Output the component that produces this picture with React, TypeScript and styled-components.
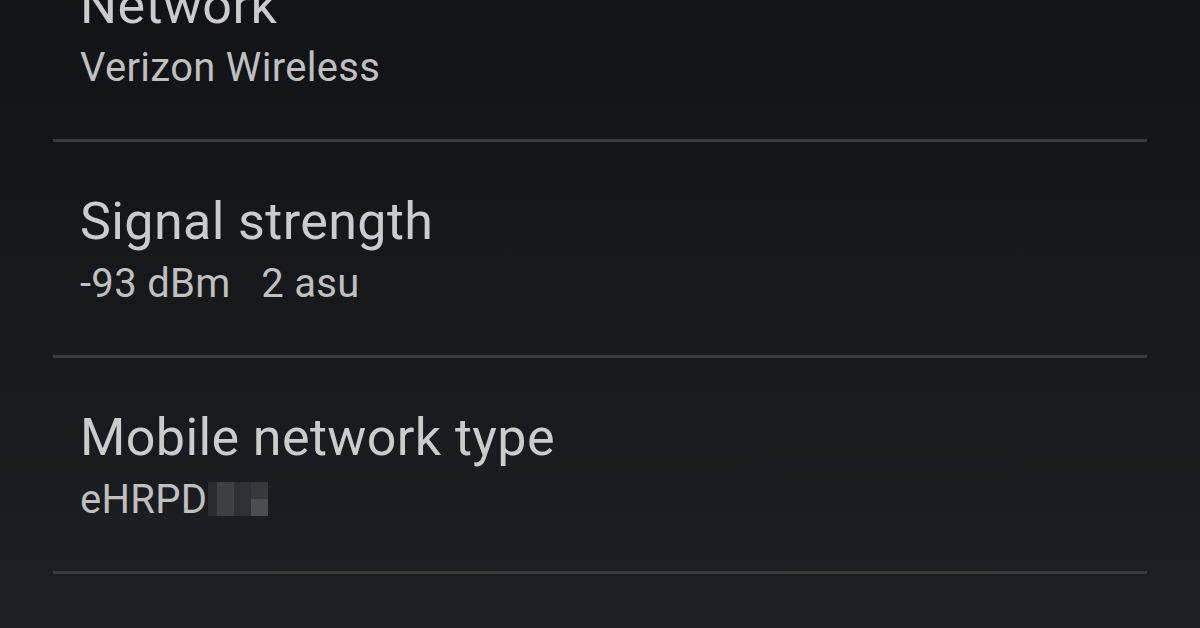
import styled, { createGlobalStyle } from 'styled-components'

const GlobalStyle = createGlobalStyle`
  html, body {
    margin: 0;
    padding: 0;
    height: 100%;
    overflow: hidden;
  }
  body {
    background: linear-gradient(180deg, #111316 0%, #1c1f23 100%);
    font-family: Roboto, 'Noto Sans', 'Liberation Sans', sans-serif;
  }
`

const Screen = styled.main`
  width: 1200px;
  height: 628px;
  overflow: hidden;
`

const List = styled.ul`
  list-style: none;
  margin: -74px 53px 0 53px;
  padding: 0;
`

const Item = styled.li`
  padding: 50px 0 48px 27px;
  border-bottom: 3px solid #393b3e;
`

const Title = styled.div`
  font-size: 52px;
  line-height: 60px;
  letter-spacing: 0.4px;
  color: #cbcbcb;
  white-space: nowrap;
`

const Summary = styled.div`
  display: flex;
  align-items: flex-start;
  margin-top: 9px;
  font-size: 40px;
  line-height: 46px;
  letter-spacing: 0.3px;
  color: #bfbfbf;
  white-space: pre;
`

// pixelated block left over from a redacted image
const Mosaic = styled.span`
  display: inline-grid;
  grid-template-columns: 9px 17px 17px 17px;
  grid-template-rows: 17px 17px;
  margin-left: 1px;
  margin-top: 5px;
`

const Cell = styled.span<{ $c: string }>`
  background: ${({ $c }) => $c};
`

const mosaic = [
  '#2a2d30', '#3d3f43', '#2d3034', '#36393c',
  '#2a2d30', '#3d3f43', '#2d3034', '#4b4d51',
]

interface Setting {
  title: string
  summary: string
  redacted?: boolean
}

const settings: Setting[] = [
  { title: 'Network', summary: 'Verizon Wireless' },
  { title: 'Signal strength', summary: '-93 dBm   2 asu' },
  { title: 'Mobile network type', summary: 'eHRPD', redacted: true },
]

export default function App() {
  return (
    <Screen>
      <GlobalStyle />
      <List>
        {settings.map((s) => (
          <Item key={s.title}>
            <Title>{s.title}</Title>
            <Summary>
              {s.summary}
              {s.redacted && (
                <Mosaic>
                  {mosaic.map((c, i) => (
                    <Cell key={i} $c={c} />
                  ))}
                </Mosaic>
              )}
            </Summary>
          </Item>
        ))}
      </List>
    </Screen>
  )
}
